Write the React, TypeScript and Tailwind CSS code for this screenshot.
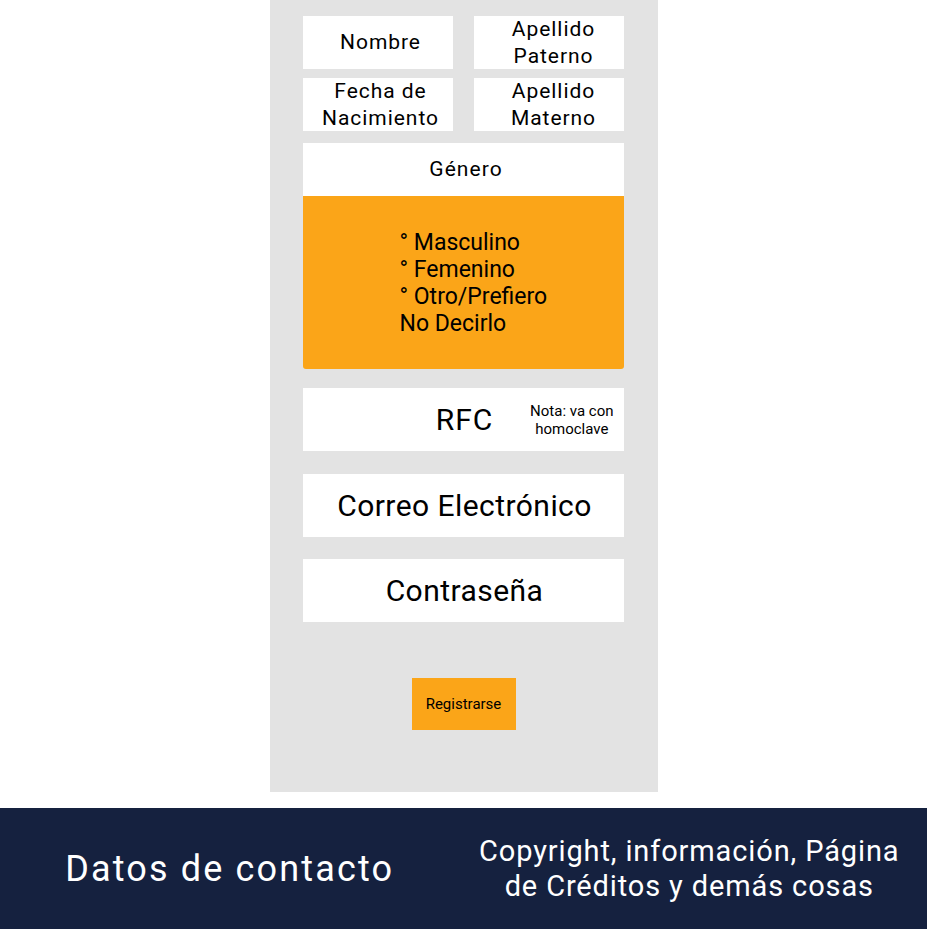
const FieldBox = ({ children, className = "" }: { children: React.ReactNode; className?: string }) => (
  <div className={`bg-white flex items-center justify-center text-center text-black ${className}`}>{children}</div>
);

export default function App() {
  return (
    <div className="w-[927px] min-h-[929px] bg-white flex flex-col font-['Roboto',sans-serif]">
      <main className="w-[388px] mx-auto bg-[#e3e3e3] h-[792px] px-[33px] pt-4 flex flex-col">
        <div className="grid grid-cols-2 gap-x-[21px] gap-y-[9px] w-[321px] text-[21px] leading-[27px] tracking-[0.045em]">
          <FieldBox className="h-[53px] pl-[6px]">Nombre</FieldBox>
          <FieldBox className="h-[53px] pl-[10px]">
            Apellido
            <br />
            Paterno
          </FieldBox>
          <FieldBox className="h-[53px] pl-[6px]">
            Fecha de
            <br />
            Nacimiento
          </FieldBox>
          <FieldBox className="h-[53px] pl-[10px]">
            Apellido
            <br />
            Materno
          </FieldBox>
        </div>

        <div className="mt-3 w-[321px]">
          <FieldBox className="h-[53px] text-[21px] tracking-[0.05em] pl-[6px]">Género</FieldBox>
          <div className="h-[173px] bg-[#fba518] rounded-b-[3px] flex flex-col justify-center pl-[97px] text-[23px] leading-[27px] text-black">
            <span>° Masculino</span>
            <span>° Femenino</span>
            <span>° Otro/Prefiero</span>
            <span>No Decirlo</span>
          </div>
        </div>

        <div className="mt-[19px] w-[321px] h-[63px] bg-white grid grid-cols-[1fr_auto_1fr] items-center text-black">
          <div />
          <span className="text-[30px] tracking-[0.03em] pl-[3px]">RFC</span>
          <span className="justify-self-end pr-[10px] text-[15px] leading-[18px] text-center">
            Nota: va con
            <br />
            homoclave
          </span>
        </div>

        <FieldBox className="mt-[23px] w-[321px] h-[63px] text-[30px] tracking-[0.015em] pl-[3px]">Correo Electrónico</FieldBox>
        <FieldBox className="mt-[22px] w-[321px] h-[63px] text-[30px] tracking-[0.015em] pl-[3px]">Contraseña</FieldBox>

        <button className="mt-[56px] mx-auto w-[104px] h-[52px] bg-[#fba518] text-[15px] text-black">Registrarse</button>
      </main>

      <footer className="mt-4 h-[121px] bg-[#15213f] grid grid-cols-2 items-center text-white">
        <p className="text-center text-[36px] tracking-[0.06em] pr-[4px]">Datos de contacto</p>
        <p className="text-center text-[29px] leading-[35px] tracking-[0.03em] pr-[12px]">
          Copyright, información, Página
          <br />
          de Créditos y demás cosas
        </p>
      </footer>
    </div>
  );
}
